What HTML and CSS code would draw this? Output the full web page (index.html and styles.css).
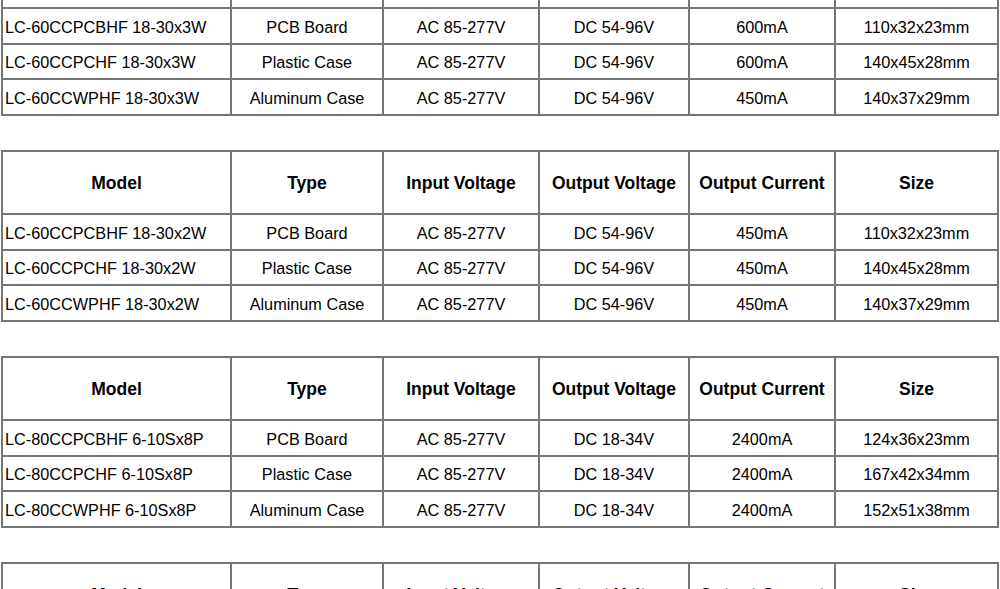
FILE: index.html
```html
<!DOCTYPE html>
<html>
<head>
<meta charset="utf-8">
<link rel="stylesheet" href="styles.css">
</head>
<body>
<div class="page">
  <table class="spec spec-first">
    <colgroup><col class="c1"><col class="c2"><col class="c3"><col class="c4"><col class="c5"><col class="c6"></colgroup>
    <tr class="head"><th>Model</th><th>Type</th><th>Input Voltage</th><th>Output Voltage</th><th>Output Current</th><th>Size</th></tr>
    <tr class="r1"><td class="model">LC-60CCPCBHF 18-30x3W</td><td>PCB Board</td><td>AC 85-277V</td><td>DC 54-96V</td><td>600mA</td><td>110x32x23mm</td></tr>
    <tr class="r2"><td class="model">LC-60CCPCHF 18-30x3W</td><td>Plastic Case</td><td>AC 85-277V</td><td>DC 54-96V</td><td>600mA</td><td>140x45x28mm</td></tr>
    <tr class="r3"><td class="model">LC-60CCWPHF 18-30x3W</td><td>Aluminum Case</td><td>AC 85-277V</td><td>DC 54-96V</td><td>450mA</td><td>140x37x29mm</td></tr>
  </table>

  <table class="spec">
    <colgroup><col class="c1"><col class="c2"><col class="c3"><col class="c4"><col class="c5"><col class="c6"></colgroup>
    <tr class="head"><th>Model</th><th>Type</th><th>Input Voltage</th><th>Output Voltage</th><th>Output Current</th><th>Size</th></tr>
    <tr class="r1"><td class="model">LC-60CCPCBHF 18-30x2W</td><td>PCB Board</td><td>AC 85-277V</td><td>DC 54-96V</td><td>450mA</td><td>110x32x23mm</td></tr>
    <tr class="r2"><td class="model">LC-60CCPCHF 18-30x2W</td><td>Plastic Case</td><td>AC 85-277V</td><td>DC 54-96V</td><td>450mA</td><td>140x45x28mm</td></tr>
    <tr class="r3"><td class="model">LC-60CCWPHF 18-30x2W</td><td>Aluminum Case</td><td>AC 85-277V</td><td>DC 54-96V</td><td>450mA</td><td>140x37x29mm</td></tr>
  </table>

  <table class="spec">
    <colgroup><col class="c1"><col class="c2"><col class="c3"><col class="c4"><col class="c5"><col class="c6"></colgroup>
    <tr class="head"><th>Model</th><th>Type</th><th>Input Voltage</th><th>Output Voltage</th><th>Output Current</th><th>Size</th></tr>
    <tr class="r1"><td class="model">LC-80CCPCBHF 6-10Sx8P</td><td>PCB Board</td><td>AC 85-277V</td><td>DC 18-34V</td><td>2400mA</td><td>124x36x23mm</td></tr>
    <tr class="r2"><td class="model">LC-80CCPCHF 6-10Sx8P</td><td>Plastic Case</td><td>AC 85-277V</td><td>DC 18-34V</td><td>2400mA</td><td>167x42x34mm</td></tr>
    <tr class="r3"><td class="model">LC-80CCWPHF 6-10Sx8P</td><td>Aluminum Case</td><td>AC 85-277V</td><td>DC 18-34V</td><td>2400mA</td><td>152x51x38mm</td></tr>
  </table>

  <table class="spec">
    <colgroup><col class="c1"><col class="c2"><col class="c3"><col class="c4"><col class="c5"><col class="c6"></colgroup>
    <tr class="head"><th>Model</th><th>Type</th><th>Input Voltage</th><th>Output Voltage</th><th>Output Current</th><th>Size</th></tr>
  </table>
</div>
</body>
</html>
```

FILE: styles.css
```css
html, body {
  margin: 0;
  padding: 0;
  background: #ffffff;
  overflow: hidden;
}

.page {
  padding: 0 0 0 1px;
  font-family: "Liberation Sans", Arial, sans-serif;
  color: #000;
}

.spec {
  border-collapse: collapse;
  table-layout: fixed;
  width: 996px;
  margin: 0 0 34px 0;
}

.spec-first {
  margin-top: -56px;
}

.c1 { width: 229px; }
.c2 { width: 152px; }
.c3 { width: 156px; }
.c4 { width: 150px; }
.c5 { width: 146px; }
.c6 { width: 163px; }

.spec th,
.spec td {
  border: 2px solid #767676;
  text-align: center;
  vertical-align: middle;
  padding: 2px 0 0 0;
  white-space: nowrap;
  overflow: hidden;
}

.spec th {
  font-size: 17.5px;
  font-weight: bold;
  height: 59px;
}

.spec td {
  font-size: 16.25px;
  font-weight: normal;
}

.spec .r1 td { height: 32px; }
.spec .r2 td { height: 31px; }
.spec .r3 td { height: 32px; }

.spec td.model {
  text-align: left;
  padding-left: 2px;
}
```
